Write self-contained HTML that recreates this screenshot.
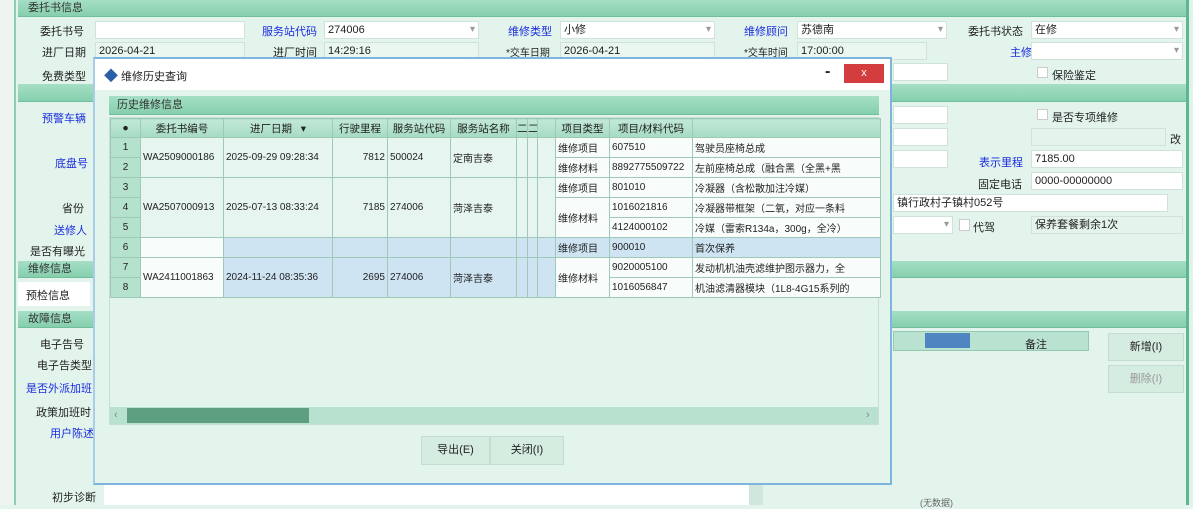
<!DOCTYPE html>
<html><head><meta charset="utf-8"><style>
*{box-sizing:border-box;margin:0;padding:0}
body{width:1193px;height:505px;overflow:hidden;background:#e2f4ec;font-family:"Liberation Sans","Noto Sans CJK SC",sans-serif;font-size:11px;color:#222;position:relative}
.a{position:absolute}
.bar{position:absolute;background:linear-gradient(#a5dfc5,#86cfae);border-bottom:1px solid #6fbf9b;color:#333;padding-left:10px;line-height:17px}
.lbl{position:absolute;text-align:right;white-space:nowrap}
.blue{color:#1a2be0}
.inp{position:absolute;background:#fff;border:1px solid #cfe3d9;height:18px;line-height:16px;padding-left:3px;white-space:nowrap;overflow:hidden}
.dd::after{content:"▾";position:absolute;right:3px;top:0;color:#999;font-size:10px}
table{border-collapse:collapse;table-layout:fixed}
td{border:1px solid #9fc9b7;height:20px;white-space:nowrap;overflow:hidden;font-size:10px;padding:0 2px}
th{border:1px solid #9fc9b7;background:linear-gradient(#c2e8d7,#a6dbc3);height:19px;font-weight:normal;font-size:10.5px;white-space:nowrap;overflow:hidden}
.rn{background:#b5e2cd;text-align:center}
.g{background:#e6f5ef}
.s{background:#cfe4f3}
.w{background:#f8fcfa}
.btn{position:absolute;background:#d5ece1;border:1px solid #c4ddd1;text-align:center}
</style></head><body>
<div class="a" style="left:0;top:0;width:16px;height:505px;background:#eef5f1;border-right:2px solid #8ccfb0"></div>
<div class="a" style="left:1186px;top:0;width:7px;height:505px;background:#dff3ea;border-left:3px solid #5fb68f"></div>
<div class="bar" style="left:18px;top:0;width:1168px;height:17px">委托书信息</div>
<span class="lbl" style="left:40px;top:23px">委托书号</span><div class="inp" style="left:95px;top:21px;width:150px"></div>
<span class="lbl blue" style="left:262px;top:23px">服务站代码</span><div class="inp dd" style="left:324px;top:21px;width:155px">274006</div>
<span class="lbl blue" style="left:508px;top:23px">维修类型</span><div class="inp dd" style="left:560px;top:21px;width:155px">小修</div>
<span class="lbl blue" style="left:744px;top:23px">维修顾问</span><div class="inp dd" style="left:797px;top:21px;width:150px">苏德南</div>
<span class="lbl" style="left:968px;top:23px">委托书状态</span><div class="inp dd" style="left:1031px;top:21px;width:152px">在修</div>
<span class="lbl" style="left:42px;top:44px">进厂日期</span><div class="inp" style="left:95px;top:42px;width:150px;background:#eaf6f0">2026-04-21</div>
<span class="lbl" style="left:273px;top:44px">进厂时间</span><div class="inp" style="left:324px;top:42px;width:155px;background:#eaf6f0">14:29:16</div>
<span class="lbl" style="left:506px;top:44px;font-size:10px">*交车日期</span><div class="inp" style="left:560px;top:42px;width:155px;background:#eaf6f0">2026-04-21</div>
<span class="lbl" style="left:744px;top:44px;font-size:10px">*交车时间</span><div class="inp" style="left:797px;top:42px;width:130px;background:#eaf6f0">17:00:00</div>
<span class="lbl blue" style="left:1010px;top:44px">主修技师</span><div class="inp dd" style="left:1031px;top:42px;width:152px"></div>
<span class="lbl" style="left:42px;top:68px">免费类型</span>
<div class="inp" style="left:893px;top:63px;width:55px"></div>
<div class="a" style="left:1037px;top:67px;width:11px;height:11px;background:#fff;border:1px solid #ccc"></div><span class="a" style="left:1052px;top:67px">保险鉴定</span>
<div class="bar" style="left:18px;top:84px;width:1168px;height:18px"></div>
<span class="lbl blue" style="left:42px;top:110px">预警车辆</span>
<div class="inp" style="left:893px;top:106px;width:55px"></div>
<div class="a" style="left:1037px;top:109px;width:11px;height:11px;background:#fff;border:1px solid #ccc"></div><span class="a" style="left:1052px;top:109px">是否专项维修</span>
<div class="inp" style="left:893px;top:128px;width:55px"></div><div class="inp" style="left:1031px;top:128px;width:135px;background:#e4f3ec"></div><span class="a" style="left:1170px;top:131px">改</span>
<span class="lbl blue" style="left:55px;top:155px">底盘号</span>
<div class="inp" style="left:893px;top:150px;width:55px"></div>
<span class="lbl blue" style="left:979px;top:154px">表示里程</span><div class="inp" style="left:1031px;top:150px;width:152px">7185.00</div>
<span class="lbl" style="left:978px;top:176px">固定电话</span><div class="inp" style="left:1031px;top:172px;width:152px">0000-00000000</div>
<span class="lbl" style="left:62px;top:200px">省份</span>
<div class="inp" style="left:893px;top:194px;width:275px">镇行政村子镇村052号</div>
<span class="lbl blue" style="left:54px;top:222px">送修人</span>
<div class="inp dd" style="left:893px;top:216px;width:60px"></div>
<div class="a" style="left:959px;top:219px;width:11px;height:12px;background:#fff;border:1px solid #ccc"></div><span class="a" style="left:973px;top:219px">代驾</span>
<div class="inp" style="left:1031px;top:216px;width:152px;background:#e4f3ec">保养套餐剩余1次</div>
<span class="lbl" style="left:30px;top:243px">是否有曝光</span>
<div class="bar" style="left:18px;top:261px;width:1168px;height:17px">维修信息</div>
<div class="a" style="left:18px;top:282px;width:72px;height:24px;background:#fff;padding:5px 8px">预检信息</div>
<div class="bar" style="left:18px;top:311px;width:1168px;height:17px">故障信息</div>
<span class="lbl" style="left:40px;top:336px">电子告号</span>
<span class="lbl" style="left:37px;top:357px">电子告类型</span>
<span class="lbl blue" style="left:26px;top:380px">是否外派加班</span>
<span class="lbl" style="left:36px;top:404px">政策加班时</span>
<span class="lbl blue" style="left:50px;top:425px">用户陈述</span>
<div class="a" style="left:893px;top:331px;width:196px;height:20px;background:#b9e2d0;border:1px solid #94c9b2"></div>
<div class="a" style="left:925px;top:333px;width:45px;height:15px;background:#4f86c2"></div>
<span class="a" style="left:1025px;top:336px">备注</span>
<div class="btn" style="left:1108px;top:333px;width:76px;height:28px;line-height:26px">新增(I)</div>
<div class="btn" style="left:1108px;top:365px;width:76px;height:28px;line-height:26px;color:#999">删除(I)</div>
<span class="a" style="left:52px;top:489px">初步诊断</span>
<div class="a" style="left:104px;top:485px;width:645px;height:20px;background:#fff"></div>
<div class="a" style="left:749px;top:485px;width:14px;height:20px;background:#cfe7dc"></div>
<span class="a" style="left:920px;top:496px;font-size:9px;color:#666">(无数据)</span>

<!-- dialog -->
<div class="a" style="left:93px;top:57px;width:799px;height:428px;background:#e2f4ec;border:2px solid #7fb4dc;border-left-color:#a9cde6">
 <div class="a" style="left:0;top:0;width:795px;height:31px;background:#fff"></div>
 <span class="a" style="left:9px;top:7px;color:#2a5fa8;font-size:14px">◆</span>
 <span class="a" style="left:26px;top:9px;font-size:11px">维修历史查询</span>
 <span class="a" style="left:730px;top:4px;font-size:16px;font-weight:bold">-</span>
 <div class="a" style="left:749px;top:5px;width:40px;height:19px;background:#d33d3d;color:#fff;text-align:center;line-height:18px;font-size:11px">x</div>
 <div class="bar" style="left:14px;top:37px;width:770px;height:19px;padding-left:8px;line-height:19px">历史维修信息</div>
 <div class="a" style="left:14px;top:58px;width:770px;height:308px;background:#e2f4ec;border:1px solid #c3e0d3">
 <table style="width:770px">
 <colgroup><col style="width:30px"><col style="width:83px"><col style="width:109px"><col style="width:55px"><col style="width:63px"><col style="width:66px"><col style="width:11px"><col style="width:10px"><col style="width:18px"><col style="width:54px"><col style="width:83px"><col style="width:188px"></colgroup>
 <tr><th>●</th><th>委托书编号</th><th>进厂日期 &nbsp; ▾</th><th>行驶里程</th><th>服务站代码</th><th>服务站名称</th><th>二</th><th>二</th><th></th><th>项目类型</th><th>项目/材料代码</th><th></th></tr>
 <tr><td class="rn">1</td><td class="g" rowspan="2">WA2509000186</td><td class="g" rowspan="2">2025-09-29 09:28:34</td><td class="g" rowspan="2" style="text-align:right">7812</td><td class="g" rowspan="2">500024</td><td class="g" rowspan="2">定南吉泰</td><td class="g" rowspan="2"></td><td class="g" rowspan="2"></td><td class="g" rowspan="2"></td><td class="w">维修项目</td><td class="w">607510</td><td class="w">驾驶员座椅总成</td></tr>
 <tr><td class="rn">2</td><td class="w">维修材料</td><td class="w">8892775509722</td><td class="w">左前座椅总成（融合黑（全黑+黑</td></tr>
 <tr><td class="rn">3</td><td class="g" rowspan="3">WA2507000913</td><td class="g" rowspan="3">2025-07-13 08:33:24</td><td class="g" rowspan="3" style="text-align:right">7185</td><td class="g" rowspan="3">274006</td><td class="g" rowspan="3">菏泽吉泰</td><td class="g" rowspan="3"></td><td class="g" rowspan="3"></td><td class="g" rowspan="3"></td><td class="w">维修项目</td><td class="w">801010</td><td class="w">冷凝器（含松散加注冷媒）</td></tr>
 <tr><td class="rn">4</td><td class="w" rowspan="2">维修材料</td><td class="w">1016021816</td><td class="w">冷凝器带框架（二氧，对应一条料</td></tr>
 <tr><td class="rn">5</td><td class="w">4124000102</td><td class="w">冷媒（雷索R134a，300g，全冷）</td></tr>
 <tr><td class="rn">6</td><td class="w"></td><td class="s"></td><td class="s"></td><td class="s"></td><td class="s"></td><td class="s"></td><td class="s"></td><td class="s"></td><td class="s">维修项目</td><td class="s">900010</td><td class="s">首次保养</td></tr>
 <tr><td class="rn">7</td><td class="w" rowspan="2">WA2411001863</td><td class="s" rowspan="2">2024-11-24 08:35:36</td><td class="s" rowspan="2" style="text-align:right">2695</td><td class="s" rowspan="2">274006</td><td class="s" rowspan="2">菏泽吉泰</td><td class="s" rowspan="2"></td><td class="s" rowspan="2"></td><td class="s" rowspan="2"></td><td class="w" rowspan="2">维修材料</td><td class="w">9020005100</td><td class="w">发动机机油壳滤维护图示器力，全</td></tr>
 <tr><td class="rn">8</td><td class="w">1016056847</td><td class="w">机油滤清器模块（1L8-4G15系列的</td></tr>
 </table>
 <div class="a" style="left:0;top:289px;width:768px;height:17px;background:#b8e1cf"></div>
 <div class="a" style="left:17px;top:290px;width:182px;height:15px;background:#5e9f82"></div>
 <span class="a" style="left:4px;top:291px;color:#888">‹</span><span class="a" style="left:756px;top:291px;color:#888">›</span>
 </div>
 <div class="btn" style="left:326px;top:377px;width:69px;height:29px;line-height:27px">导出(E)</div>
 <div class="btn" style="left:395px;top:377px;width:74px;height:29px;line-height:27px">关闭(I)</div>
</div>
</body></html>
